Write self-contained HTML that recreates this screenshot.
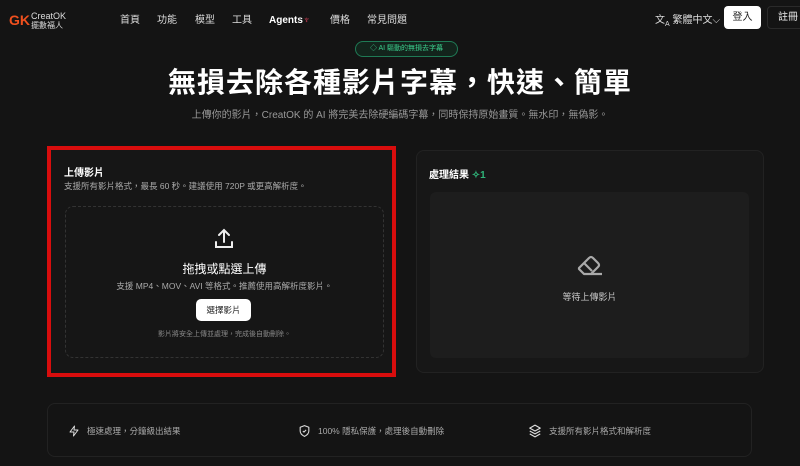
<!DOCTYPE html><html><head><meta charset="utf-8"><style>
*{margin:0;padding:0;box-sizing:border-box}
body{width:800px;height:466px;background:#141414;color:#eee;font-family:"Liberation Sans","Noto Sans CJK TC",sans-serif;position:relative;overflow:hidden}
.a{position:absolute}
.nav span{position:absolute;top:15px;font-size:10px;color:#ddd;line-height:12px}
</style></head><body>
<div class="a" style="left:9px;top:13px;width:20px;height:14px;color:#f0501e;font-weight:bold;font-size:14px;line-height:14px">GK</div>
<div class="a" style="left:31px;top:12px;font-size:9px;color:#ddd;line-height:9px">CreatOK<br><span style="font-size:8px">擺數福人</span></div>
<div class="nav">
<span style="left:120px">首頁</span><span style="left:157px">功能</span><span style="left:195px">模型</span><span style="left:232px">工具</span><span style="left:269px;font-weight:bold;color:#fff">Agents<b style="color:#e0405a">♆</b></span><span style="left:330px">價格</span><span style="left:367px">常見問題</span>
<span style="left:655px">文<sub style="font-size:7px">A</sub> 繁體中文⌵</span>
</div>
<div class="a" style="left:724px;top:6px;width:37px;height:23px;background:#fff;border-radius:4px;color:#222;font-size:10px;text-align:center;line-height:23px">登入</div>
<div class="a" style="left:767px;top:6px;width:40px;height:23px;border:1px solid #2a2a2a;border-radius:4px;font-size:10px;line-height:22px;padding-left:10px">註冊</div>
<div class="a" style="left:355px;top:41px;width:103px;height:16px;border:1px solid #1f7a55;background:#13241c;border-radius:8px;color:#3ccf8e;font-size:7px;text-align:center;line-height:14px">◇ AI 驅動的無損去字幕</div>
<div class="a" style="left:0;top:61px;width:800px;text-align:center;font-size:28px;font-weight:bold;color:#fff;letter-spacing:1px">無損去除各種影片字幕，快速、簡單</div>
<div class="a" style="left:0;top:106px;width:800px;text-align:center;font-size:10px;color:#999">上傳你的影片，CreatOK 的 AI 將完美去除硬編碼字幕，同時保持原始畫質。無水印，無偽影。</div>
<div class="a" style="left:47px;top:146px;width:349px;height:231px;border:4px solid #d80d0d;background:#161616"></div>
<div class="a" style="left:64px;top:164px;font-size:10px;font-weight:bold;color:#fff">上傳影片</div>
<div class="a" style="left:64px;top:180px;font-size:8.5px;color:#aaa">支援所有影片格式，最長 60 秒。建議使用 720P 或更高解析度。</div>
<div class="a" style="left:65px;top:206px;width:319px;height:152px;border:1px dashed #333;border-radius:8px"></div>
<svg class="a" style="left:212px;top:227px" width="24" height="24" viewBox="0 0 24 24" fill="none" stroke="#eee" stroke-width="2" stroke-linecap="round"><path d="M12 15V3M7 8l5-5 5 5M4 15v5h16v-5"/></svg>
<div class="a" style="left:65px;top:260px;width:319px;text-align:center;font-size:12px;color:#fff">拖拽或點選上傳</div>
<div class="a" style="left:65px;top:280px;width:319px;text-align:center;font-size:8.5px;color:#aaa">支援 MP4、MOV、AVI 等格式。推薦使用高解析度影片。</div>
<div class="a" style="left:196px;top:299px;width:55px;height:22px;background:#fff;border-radius:5px;color:#222;font-size:8.5px;text-align:center;line-height:22px">選擇影片</div>
<div class="a" style="left:65px;top:329px;width:319px;text-align:center;font-size:7px;color:#888">影片將安全上傳並處理，完成後自動刪除。</div>
<div class="a" style="left:416px;top:150px;width:348px;height:223px;border:1px solid #222;border-radius:8px;background:#171717"></div>
<div class="a" style="left:429px;top:166px;font-size:10px;font-weight:bold;color:#fff">處理結果 <span style="color:#2fb57a">✧1</span></div>
<div class="a" style="left:430px;top:192px;width:319px;height:166px;background:#1d1d1d;border-radius:6px"></div>
<svg class="a" style="left:575px;top:251px" width="30" height="28" viewBox="0 0 30 28" fill="none" stroke="#aaa" stroke-width="2.2" stroke-linejoin="round"><path d="M4 17L14 7q2-2 4 0l5 5q2 2 0 4l-7 7H9L4 18z"/><path d="M9 12l8 8M16 23h11"/></svg>
<div class="a" style="left:430px;top:290px;width:319px;text-align:center;font-size:9px;color:#ccc">等待上傳影片</div>
<div class="a" style="left:47px;top:403px;width:705px;height:54px;border:1px solid #222;border-radius:8px"></div>
<svg class="a" style="left:68px;top:424px" width="12" height="14" viewBox="0 0 24 24" fill="none" stroke="#ddd" stroke-width="2" stroke-linejoin="round"><path d="M13 2L4 14h8l-1 8 9-12h-8z"/></svg>
<div class="a" style="left:87px;top:425px;font-size:8.5px;color:#aaa">極速處理，分鐘級出結果</div>
<svg class="a" style="left:298px;top:424px" width="13" height="14" viewBox="0 0 24 24" fill="none" stroke="#ddd" stroke-width="2" stroke-linejoin="round"><path d="M12 2l8 3v7c0 5-4 8-8 10-4-2-8-5-8-10V5z"/><path d="M9 12l2 2 4-4"/></svg>
<div class="a" style="left:318px;top:425px;font-size:8.5px;color:#aaa">100% 隱私保護，處理後自動刪除</div>
<svg class="a" style="left:528px;top:424px" width="14" height="14" viewBox="0 0 24 24" fill="none" stroke="#ddd" stroke-width="2" stroke-linejoin="round"><path d="M12 2l9 5-9 5-9-5z"/><path d="M3 12l9 5 9-5M3 17l9 5 9-5"/></svg>
<div class="a" style="left:549px;top:425px;font-size:8.5px;color:#aaa">支援所有影片格式和解析度</div>
</body></html>
